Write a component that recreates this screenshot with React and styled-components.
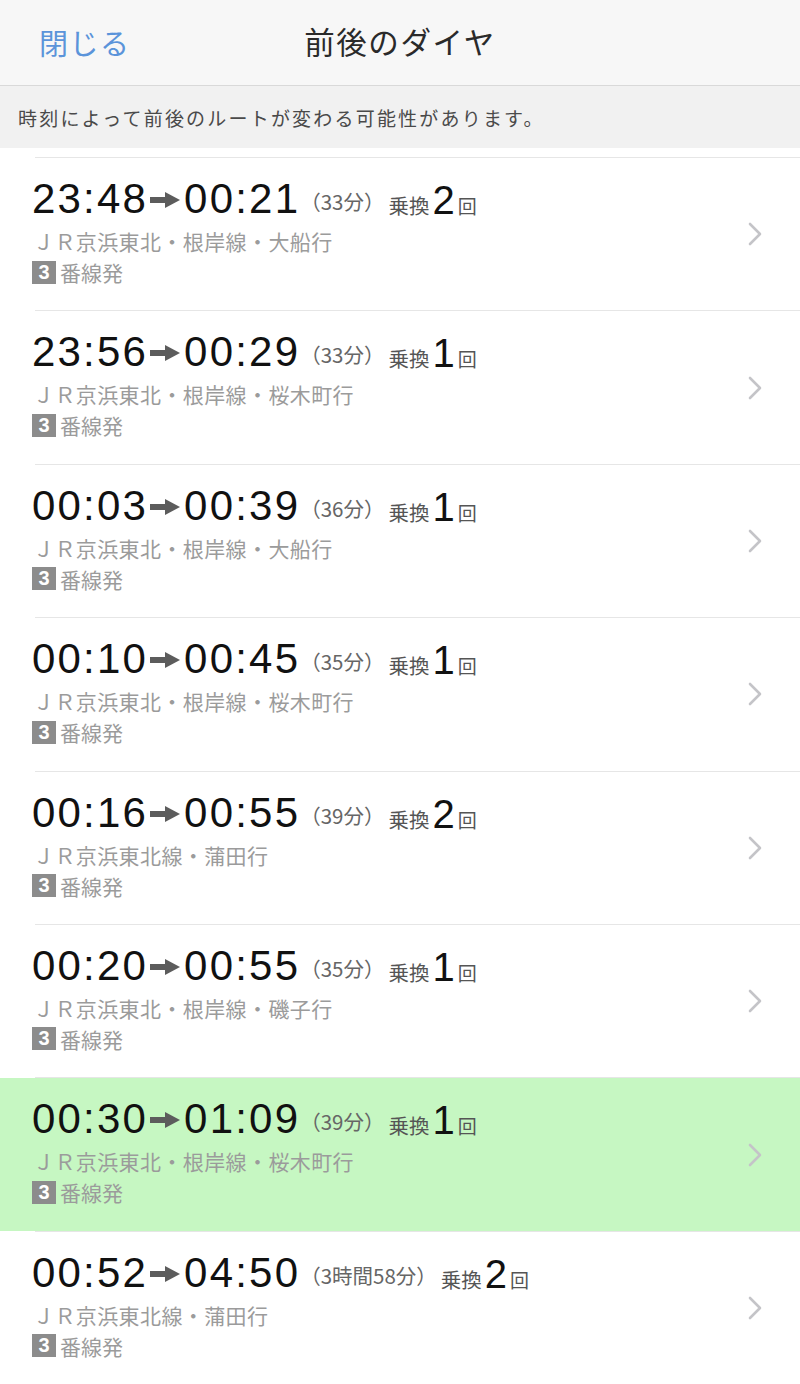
import React from "react";
import styled, { createGlobalStyle } from "styled-components";

const Global = createGlobalStyle`
  html, body { margin: 0; padding: 0; background: #ffffff; }
  body { font-family: "Liberation Sans", "Noto Sans CJK JP", sans-serif; overflow: hidden; }
`;

const Page = styled.div`
  width: 800px;
  height: 1384px;
  overflow: hidden;
  background: #ffffff;
`;

const Header = styled.header`
  position: relative;
  height: 85px;
  background: #f7f7f7;
  border-bottom: 1px solid #d9d9d9;
  display: flex;
  align-items: center;
  justify-content: center;
`;

const CloseButton = styled.button`
  position: absolute;
  left: 39px;
  top: 22px;
  border: 0;
  background: none;
  padding: 0;
  font-family: "Noto Sans CJK JP", sans-serif;
  font-size: 29px;
  letter-spacing: 1.5px;
  line-height: 40px;
  color: #5b94da;
`;

const Title = styled.h1`
  margin: 0 0 4px 0;
  font-family: "Noto Sans CJK JP", sans-serif;
  font-weight: 400;
  font-size: 30.5px;
  line-height: 40px;
  color: #2a2a2a;
  letter-spacing: 1.6px;
`;

const Notice = styled.div`
  height: 62px;
  background: #f1f1f1;
  display: flex;
  align-items: center;
  padding-left: 18px;
  font-family: "Noto Sans CJK JP", sans-serif;
  font-size: 19px;
  letter-spacing: 2.2px;
  color: #4a4a4a;
`;

const List = styled.div`
  padding-top: 9px;
  background: #ffffff;
`;

const Divider = styled.div`
  height: 1px;
  margin-left: 35px;
  background: #e6e6e6;
`;

const Row = styled.div`
  height: 152.4px;
  box-sizing: border-box;
  display: flex;
  align-items: flex-start;
  padding: 19px 38px 0 32px;
  background: ${(p) => (p.$active ? "#c6f7c2" : "#ffffff")};
`;

const Info = styled.div`
  flex: 1;
  display: flex;
  flex-direction: column;
`;

const TimeLine = styled.div`
  display: flex;
  align-items: center;
  height: 44px;
`;

const Time = styled.span`
  font-family: "Liberation Sans", sans-serif;
  font-size: 42px;
  letter-spacing: 2.2px;
  color: #111;
  line-height: 44px;
`;

const Arrow = styled.svg`
  width: 30px;
  height: 16px;
  margin: 2px 4px 0 2px;
  flex: none;
`;

const Duration = styled.span`
  font-family: "Noto Sans CJK JP", sans-serif;
  font-size: 20.5px;
  color: #666;
  margin-left: 0;
  margin-top: 4px;
`;

const Transfer = styled.span`
  display: flex;
  align-items: baseline;
  margin-left: 4px;
  margin-top: 2px;
`;

const TransferLabel = styled.span`
  font-family: "Noto Sans CJK JP", sans-serif;
  font-size: 20.5px;
  color: #555;
`;

const TransferCount = styled.span`
  font-family: "Liberation Sans", sans-serif;
  font-size: 40px;
  color: #111;
  margin: 0 3px 0 3px;
  line-height: 40px;
`;

const TransferUnit = styled.span`
  font-family: "Noto Sans CJK JP", sans-serif;
  font-size: 19px;
  color: #555;
`;

const LineName = styled.div`
  margin-top: 6px;
  padding-left: 1px;
  font-family: "Noto Sans CJK JP", sans-serif;
  font-size: 21px;
  letter-spacing: 0.4px;
  line-height: 28px;
  color: #9b9b9b;
`;

const Platform = styled.div`
  display: flex;
  align-items: center;
  margin-top: 3px;
  height: 28px;
  font-family: "Noto Sans CJK JP", sans-serif;
  font-size: 21px;
  color: #9b9b9b;
`;

const Badge = styled.span`
  width: 24px;
  height: 23px;
  background: #8c8c8c;
  color: #ffffff;
  font-family: "Liberation Sans", sans-serif;
  font-weight: 700;
  font-size: 20px;
  display: inline-flex;
  align-items: center;
  justify-content: center;
  margin-right: 4px;
`;

const Chevron = styled.svg`
  width: 14px;
  height: 24px;
  flex: none;
  align-self: center;
  margin-top: -19px;
`;

const routes = [
  { dep: "23:48", arr: "00:21", dur: "（33分）", tr: "2", line: "ＪＲ京浜東北・根岸線・大船行" },
  { dep: "23:56", arr: "00:29", dur: "（33分）", tr: "1", line: "ＪＲ京浜東北・根岸線・桜木町行" },
  { dep: "00:03", arr: "00:39", dur: "（36分）", tr: "1", line: "ＪＲ京浜東北・根岸線・大船行" },
  { dep: "00:10", arr: "00:45", dur: "（35分）", tr: "1", line: "ＪＲ京浜東北・根岸線・桜木町行" },
  { dep: "00:16", arr: "00:55", dur: "（39分）", tr: "2", line: "ＪＲ京浜東北線・蒲田行" },
  { dep: "00:20", arr: "00:55", dur: "（35分）", tr: "1", line: "ＪＲ京浜東北・根岸線・磯子行" },
  { dep: "00:30", arr: "01:09", dur: "（39分）", tr: "1", line: "ＪＲ京浜東北・根岸線・桜木町行", active: true },
  { dep: "00:52", arr: "04:50", dur: "（3時間58分）", tr: "2", line: "ＪＲ京浜東北線・蒲田行" },
];

function RouteRow({ r }) {
  return (
    <Row $active={r.active}>
      <Info>
        <TimeLine>
          <Time>{r.dep}</Time>
          <Arrow viewBox="0 0 30 16">
            <path d="M0 5 H15 V0 L30 8 L15 16 V11 H0 Z" fill="#5c5c5c" />
          </Arrow>
          <Time>{r.arr}</Time>
          <Duration>{r.dur}</Duration>
          <Transfer>
            <TransferLabel>乗換</TransferLabel>
            <TransferCount>{r.tr}</TransferCount>
            <TransferUnit>回</TransferUnit>
          </Transfer>
        </TimeLine>
        <LineName>{r.line}</LineName>
        <Platform>
          <Badge>3</Badge>番線発
        </Platform>
      </Info>
      <Chevron viewBox="0 0 14 24">
        <polyline points="2,2 12,12 2,22" fill="none" stroke="#c4c4c8" strokeWidth="2.6" strokeLinecap="round" strokeLinejoin="round" />
      </Chevron>
    </Row>
  );
}

export default function App() {
  return (
    <Page>
      <Global />
      <Header>
        <CloseButton>閉じる</CloseButton>
        <Title>前後のダイヤ</Title>
      </Header>
      <Notice>時刻によって前後のルートが変わる可能性があります。</Notice>
      <List>
        {routes.map((r, i) => (
          <React.Fragment key={i}>
            <Divider />
            <RouteRow r={r} />
          </React.Fragment>
        ))}
        <Divider />
      </List>
    </Page>
  );
}
